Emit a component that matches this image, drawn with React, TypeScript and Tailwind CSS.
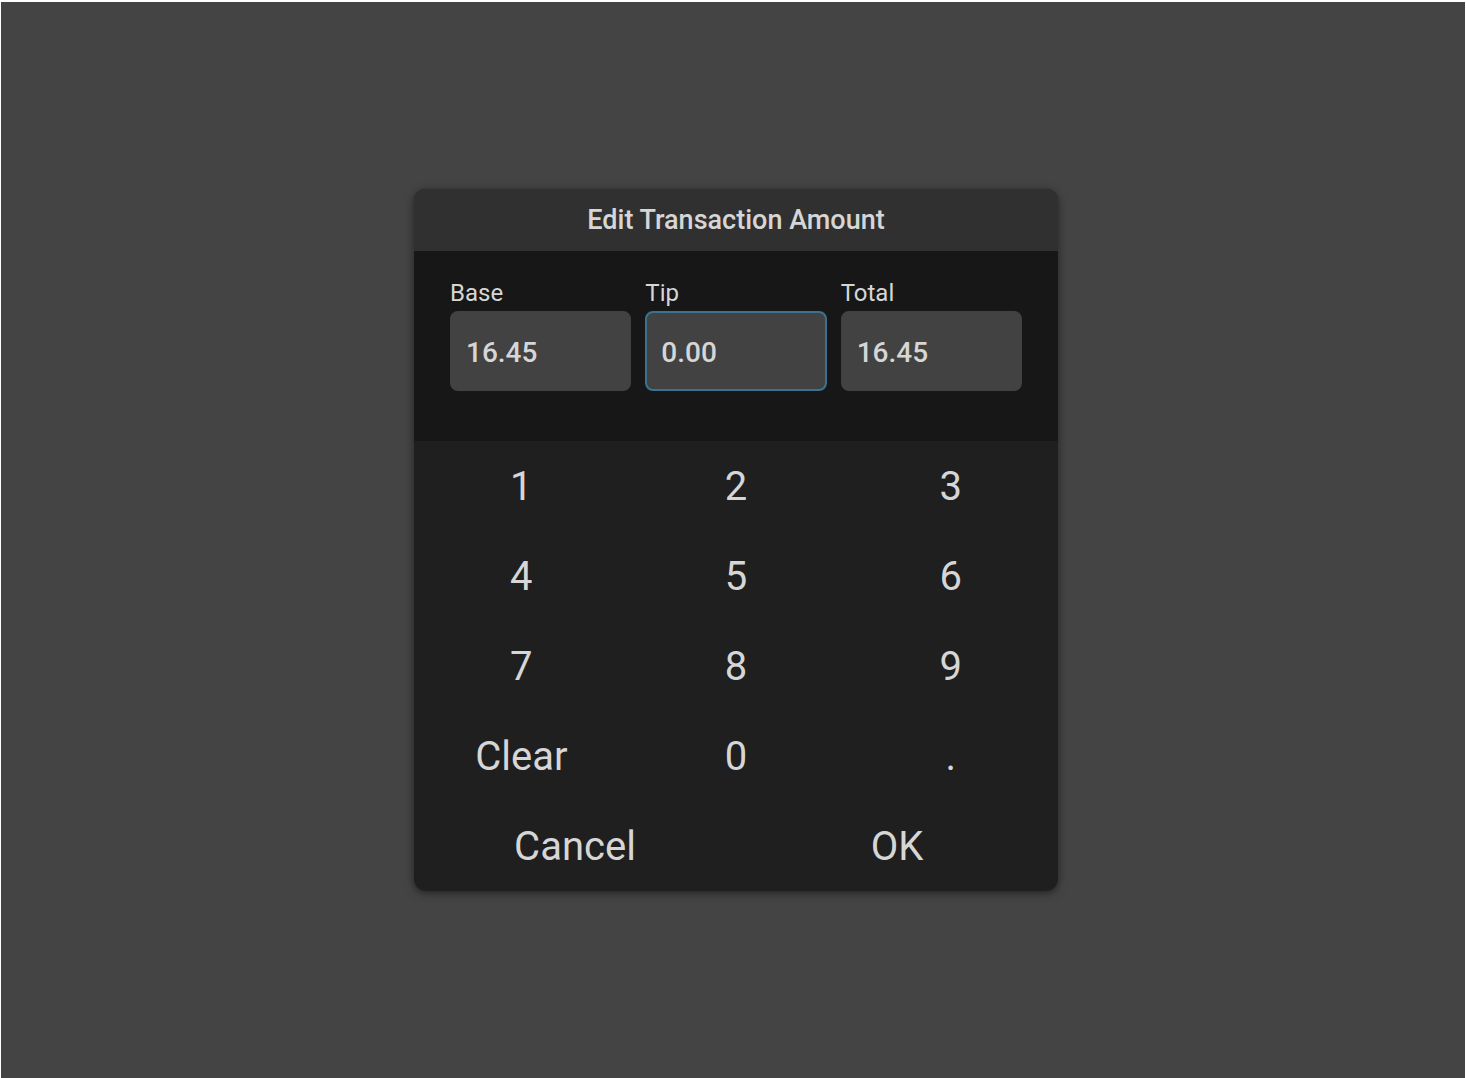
import { useState } from "react";

type AmountFieldProps = {
  id: string;
  label: string;
  value: string;
  active: boolean;
  onSelect: () => void;
};

type KeyProps = {
  label: string;
  onPress?: () => void;
};

const fields = [
  { id: "base", label: "Base" },
  { id: "tip", label: "Tip" },
  { id: "total", label: "Total" },
];

const keys = ["1", "2", "3", "4", "5", "6", "7", "8", "9", "Clear", "0", "."];

function AmountField({ id, label, value, active, onSelect }: AmountFieldProps) {
  return (
    <div className="flex min-w-0 flex-col">
      <label htmlFor={id} className="text-2xl leading-9">
        {label}
      </label>
      <input
        id={id}
        type="text"
        readOnly
        value={value}
        onFocus={onSelect}
        className={`h-20 w-full rounded-lg border-2 bg-[#424242] px-3.5 pt-0.5 text-[28px] font-medium outline-none ${
          active ? "border-[#3a7391]" : "border-[#424242]"
        }`}
      />
    </div>
  );
}

function Key({ label, onPress }: KeyProps) {
  return (
    <button
      type="button"
      onClick={onPress}
      className="h-[90px] cursor-pointer pt-0.5 text-[40px] active:bg-[#2a2a2a]"
    >
      {label}
    </button>
  );
}

export default function App() {
  const [active, setActive] = useState("tip");
  const [amounts, setAmounts] = useState<Record<string, string>>({
    base: "16.45",
    tip: "0.00",
    total: "16.45",
  });

  const handleKey = (key: string) => {
    setAmounts((prev) => {
      const current = prev[active];
      if (key === "Clear") return { ...prev, [active]: "0.00" };
      if (key === "." && current.includes(".")) return prev;
      return { ...prev, [active]: current + key };
    });
  };

  return (
    <div className="flex min-h-screen border-x border-t-2 border-white bg-[#444444] font-['Roboto',sans-serif] text-[#d6d6d6]">
      <main className="flex flex-1 items-center justify-center pl-1.5">
        <section
          role="dialog"
          aria-labelledby="dialog-title"
          className="w-full max-w-[644px] overflow-hidden rounded-xl bg-[#1f1f1f] shadow-[0_2px_8px_rgba(0,0,0,0.5)]"
        >
          <header className="flex h-[62px] items-center justify-center bg-[#303030]">
            <h1 id="dialog-title" className="text-[27px] font-medium">
              Edit Transaction Amount
            </h1>
          </header>
          <div className="grid grid-cols-3 gap-3.5 bg-[#171717] px-9 pt-6 pb-[50px]">
            {fields.map((field) => (
              <AmountField
                key={field.id}
                id={field.id}
                label={field.label}
                value={amounts[field.id]}
                active={active === field.id}
                onSelect={() => setActive(field.id)}
              />
            ))}
          </div>
          <div className="grid grid-cols-3">
            {keys.map((key) => (
              <Key key={key} label={key} onPress={() => handleKey(key)} />
            ))}
          </div>
          <div className="grid grid-cols-2">
            <Key label="Cancel" />
            <Key label="OK" />
          </div>
        </section>
      </main>
    </div>
  );
}
